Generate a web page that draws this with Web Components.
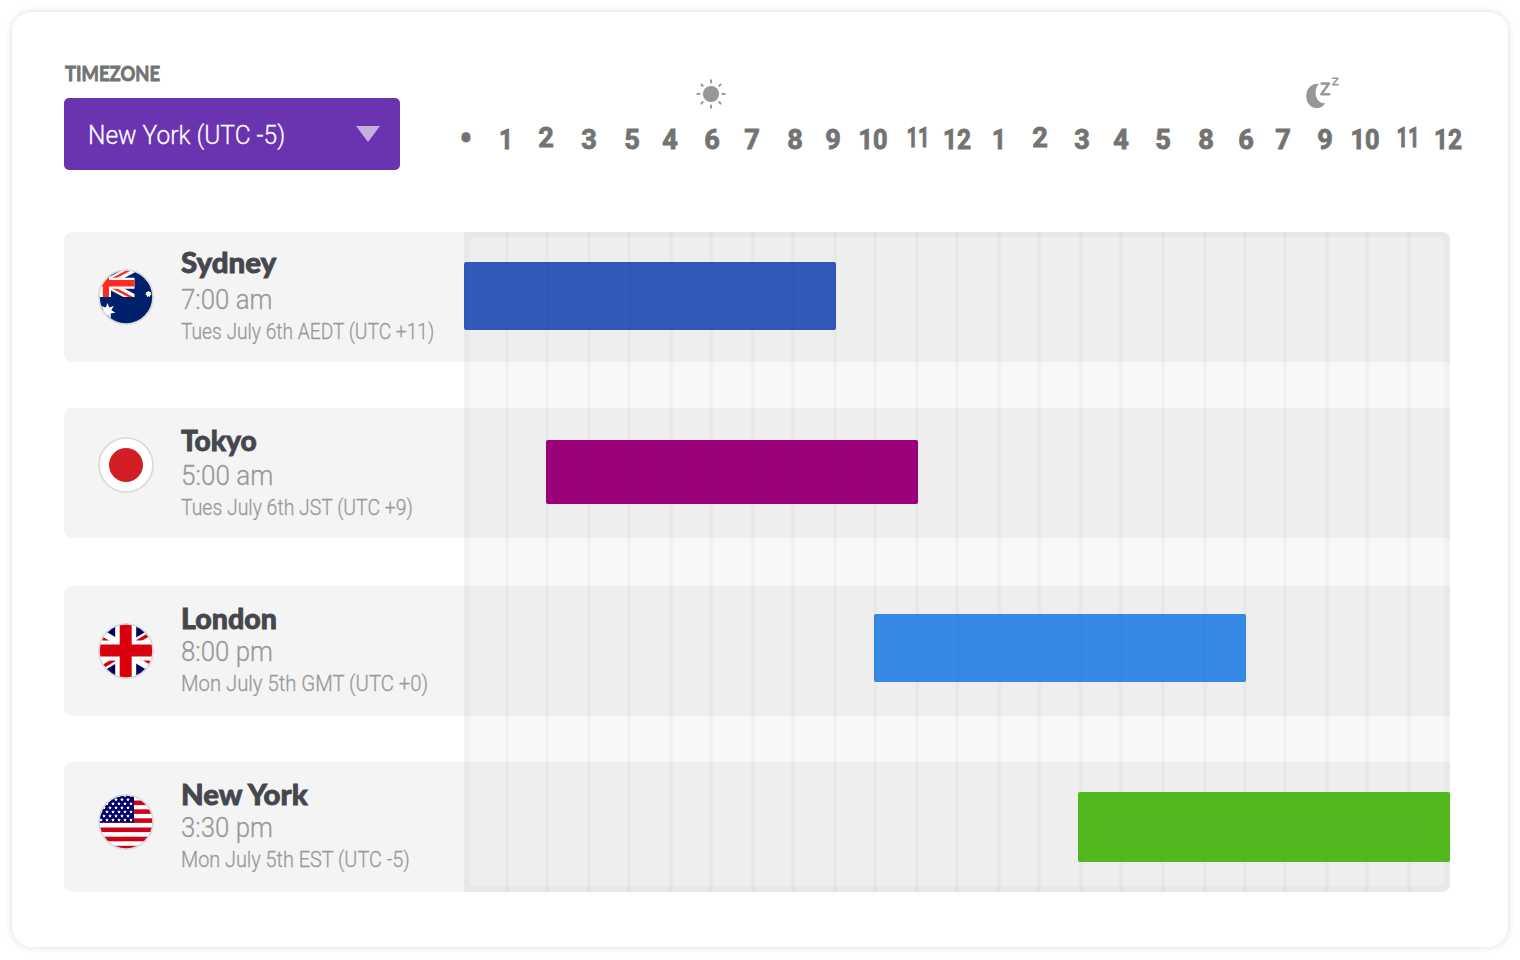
<!DOCTYPE html>
<html lang="en"><head><meta charset="utf-8"><title>Timezones</title>
<style>html,body{margin:0;background:#fff}body{width:1520px;height:960px;overflow:hidden}</style></head>
<body><tz-board></tz-board>
<script>
const define = (name, render, after) => customElements.define(name, class extends HTMLElement {
  connectedCallback() {
    if (this.shadowRoot) return;
    this.attachShadow({ mode: 'open' }).innerHTML = render(this);
    if (after) after(this);
  }
});

// Text squeezed or stretched horizontally to a set width.
define('fit-text', el => `<style>
:host{display:block;height:var(--lh,30px);line-height:var(--lh,30px);white-space:nowrap}
span{display:inline-block;transform-origin:var(--origin,0) 50%}</style><span><slot></slot></span>`, el => {
  const s = el.shadowRoot.querySelector('span');
  s.style.transform = `scaleX(${+el.getAttribute('w') / s.offsetWidth})`;
});

const star = (x, y, r, n = 5, k = .42) => {
  let p = '';
  for (let i = 0; i < n * 2; i++) {
    const a = Math.PI * i / n - Math.PI / 2, q = i % 2 ? r * k : r;
    p += (x + q * Math.cos(a)).toFixed(2) + ',' + (y + q * Math.sin(a)).toFixed(2) + ' ';
  }
  return `<polygon points="${p}" fill="#fff"/>`;
};
const flags = {
  au: `<rect width="56" height="56" fill="#00206b"/><clipPath id="canton"><rect width="36.500" height="28"/></clipPath>
    <g clip-path="url(#canton)"><path stroke="#fff" stroke-width="8" d="M8 14.200L44 -5M8 14.200L44 33.400M8 14.200L-4 6"/>
    <path stroke="#ff2a22" stroke-width="2.400" d="M8 13.500L44 -5.700M8 14.900L44 34.100"/>
    <path fill="#fff" d="M0 8.800H37v10.900H13V29H2V19.700H0z"/><path fill="#ff2a22" d="M3 11H37v6.500H11V29H4.800V17.500H3z"/>
    <path fill="#ff2a22" d="M4.800 17V7.500L8 5l3 2v10z"/></g>${star(9.5, 42, 8, 7, .5)}${star(50.5, 25, 3.3, 7, .65)}`,
  jp: `<rect width="56" height="56" fill="#fff"/><circle cx="28" cy="28" r="17" fill="#d11f25"/>`,
  gb: `<rect width="56" height="56" fill="#00005e"/>
    <path stroke="#fff" stroke-width="12" d="M-12 3.500L68 51.500M-12 51.500L68 3.500"/>
    <path stroke="#d8000c" stroke-width="3.400" d="M28 29.700L-12 5.700M28 25.300L68 1.300M28 29.700L-12 53.700M28 25.300L68 49.300"/>
    <path stroke="#fff" stroke-width="21" d="M27.700 0V56"/><path stroke="#fff" stroke-width="20" d="M0 27.500H56"/>
    <path stroke="#d8000c" stroke-width="12" d="M27.700 0V56M0 27.500H56"/>`,
  us: `<rect width="56" height="56" fill="#fff"/>` +
    [6.5, 15.3, 24.3, 33.5, 42.7, 51.8].map(y => `<rect y="${y}" width="56" height="4.6" fill="#d0021b"/>`).join('') +
    `<rect width="36" height="28.5" fill="#000066"/>` +
    [1.5, 5.6, 9.7, 13.8, 17.9, 22, 26].map((y, r) => [0, 1, 2, 3, 4, 5].map(c => r % 2 && c > 4 ? '' : star(3 + c * 6 + (r % 2 ? 3 : 0), y, 1.9, 5, .5)).join('')).join('')
};
define('country-flag', el => `<style>:host{display:block;width:56px;height:56px;flex:none}svg{display:block}</style>
<svg width="56" height="56" viewBox="0 0 56 56" fill="none"><defs><clipPath id="c"><circle cx="28" cy="28" r="27.2"/></clipPath></defs>
<g clip-path="url(#c)">${flags[el.getAttribute('code')]}</g><circle cx="28" cy="28" r="27" stroke="#dadadd" stroke-width="1.7"/></svg>`);

define('sun-icon', () => `<style>:host,svg{display:block}</style><svg width="30" height="30" viewBox="-15 -15 30 30"><circle r="8.1" fill="#979797"/>
<path stroke="#979797" stroke-width="2" stroke-linecap="round" d="M0-13.7V-11.5M0 11.5V13.7M-13.7 0H-11.5M11.5 0H13.7M-9.6-9.6L-8.3-8.1M9.6-9.6L8.3-8.1M-9.6 9.6L-8.3 8.1M9.6 9.6L8.3 8.1"/></svg>`);
define('moon-icon', () => `<style>:host,svg{display:block}</style><svg width="36" height="36" viewBox="0 0 36 36" fill="none">
<path fill="#979797" d="M13 6.800C5.500 5.800 .2 12 .2 19C.2 26 5 31.200 11 31.200C14.500 31.200 17.700 29.500 19 26.100C11.500 27.500 5.500 15.500 13 6.800Z"/>
<path stroke="#979797" stroke-width="2.400" stroke-linejoin="round" stroke-linecap="round" d="M15.700 6.500H23L15.300 17.300H23.300"/><path stroke="#979797" stroke-width="1.600" stroke-linejoin="round" stroke-linecap="round" d="M26.700 1.200H32L26.700 7.800H32.200"/></svg>`);

define('zone-select', () => `<style>:host{display:block;width:336px;flex:none}
.l{font:bold 20px Lato,sans-serif;color:#737373;--lh:24px;-webkit-text-stroke:.8px #737373;margin-left:.5px}
.b{margin-top:13px;height:72px;border-radius:5px;background:#6a34b1;display:flex;align-items:center;justify-content:space-between;padding:0 20px 0 24px;box-sizing:border-box;color:#fff;font:300 26px Roboto,sans-serif;-webkit-text-stroke:.3px #fff}
.b fit-text{margin-top:2px}
svg{display:block}</style><fit-text class="l" w="95">TIMEZONE</fit-text>
<div class="b"><fit-text w="197">New York (UTC -5)</fit-text><svg width="24" height="16" viewBox="0 0 24 16"><path d="M0 0H24L12 16Z" fill="#c5aee0"/></svg></div>`);

const hours = [['•',466,-.5],[1,506.5],[2,546.5,-1.5],[3,589.5],[5,632],[4,670],[6,712],[7,752],[8,795.5],[9,833.5],[10,873.5],[11,918,-1.5],[12,957.5],[1,999],[2,1040,-1.5],[3,1082],[4,1121],[5,1163],[8,1206],[6,1246.5],[7,1283.5],[9,1325.5],[10,1365.5],[11,1408.5,-1.5],[12,1448]];
const widths = { '•': 13, 10: 29, 11: 23, 12: 28, 1: 14 };
const edges = hours.map((h, i) => i ? (h[1] + hours[i - 1][1]) / 2 : 446).concat(1468);
define('hour-scale', () => `<style>:host{display:block;width:1022px;flex:none}
.icons{display:flex;height:42px}.icons sun-icon{margin:3px 0 0 250px}.icons moon-icon{margin:1px 0 0 580px}
.h{display:flex;height:42px;align-items:center;font:bold 28px/42px Roboto,sans-serif;color:#737373;-webkit-text-stroke:.9px #737373;--lh:42px;--origin:50%}
.h fit-text{flex:none;text-align:center}.h fit-text:first-child{font-size:38px}</style><div class="icons"><sun-icon></sun-icon><moon-icon></moon-icon></div>
<div class="h">${hours.map((h, i) => {
  const half = Math.min(h[1] - edges[i], edges[i + 1] - h[1]), ml = h[1] - half - edges[i], mr = edges[i + 1] - h[1] - half;
  return `<fit-text w="${widths[h[0]] || 15.5}" style="width:${half * 2}px;margin:0 ${mr}px 0 ${ml}px;transform:translateY(${(h[2] || 0) + .5}px)">${h[0]}</fit-text>`;
}).join('')}</div>`);

define('city-row', el => {
  const a = n => el.getAttribute(n);
  return `<style>:host{display:flex;height:130px;width:1386px;background:#f4f4f4;border-radius:8px 0 0 8px;align-items:flex-start}
country-flag{margin:${a('fy')}px 0 0 34.4px}.t{margin-left:26.2px;width:283.4px;flex:none;color:#999;font:300 27.5px Roboto,sans-serif;-webkit-text-stroke:.3px #999}
.n{--lh:36px;font:900 29px Lato,sans-serif;color:#45474d;margin-top:${a('ny')}px;-webkit-text-stroke:.8px #45474d}
.c{--lh:32px;margin-top:${a('cy')}px}.d{--lh:28px;font-size:22px;margin-top:2px}
.p{width:986px;height:130px;background:#eee;display:flow-root;flex:none}
.bar{position:relative;z-index:2;height:${a('bh')}px;width:372px;margin:${a('by')}px 0 0 ${a('bx')}px;background:repeating-linear-gradient(90deg,rgba(0,0,0,.012) 0 4px,transparent 4px 41px) ${a('gx') || 0}px 0,${a('color')};border-radius:2px}</style><country-flag code="${a('code')}"></country-flag>
<div class="t"><fit-text class="n" w="${a('nw')}">${a('name')}</fit-text><fit-text class="c" w="${a('cw')}">${a('time')}</fit-text><fit-text class="d" w="${a('dw')}">${a('date')}</fit-text></div>
<div class="p"><div class="bar"></div></div>`;
});

const lines = [505,545,587,627,669,709,751,791,833,873,915,955,997,1037,1079,1119,1161,1203,1243,1283,1325,1365,1407];
define('grid-lines', () => `<style>:host,svg{display:block}</style><svg width="986" height="660">
<g fill="#000" fill-opacity=".022">${lines.map(x => `<rect x="${x - 464}" width="4" height="660"/>`).join('')}
<path fill-rule="evenodd" d="M0 0H986V660H0ZM10 5Q6 5 6 9V649Q6 654 10 654H976Q980 654 980 649V9Q980 5 976 5Z"/></g></svg>`);

define('tz-board', () => `<style>
:host{display:block;box-sizing:border-box;width:1496px;height:935px;margin:12px;border-radius:20px;background:#fff;box-shadow:0 0 7px rgba(0,0,0,.15);padding:48.5px 46px 0 52px}
.top{display:flex;height:171.5px}hour-scale{margin:15.5px 0 0 46px}
.rows{position:relative;width:1386px;height:660px;display:flex;flex-direction:column;border-radius:8px;overflow:hidden}
.bg{position:absolute;left:400px;top:0;width:986px;height:660px;background:#f8f8f8}
grid-lines{position:absolute;z-index:1;left:400px;top:0}
city-row{position:relative;flex:none}</style>
<div class="top"><zone-select></zone-select><hour-scale></hour-scale></div>
<div class="rows"><div class="bg"></div>
<city-row code="au" name="Sydney" time="7:00 am" date="Tues July 6th AEDT (UTC +11)" nw="95.5" cw="91" dw="253" fy="36.5" ny="12" cy="4" by="30" bh="68" bx="0" color="#3158ba"></city-row>
<city-row style="margin-top:46px" code="jp" name="Tokyo" time="5:00 am" date="Tues July 6th JST (UTC +9)" nw="75.5" cw="92" dw="232" fy="28.5" ny="14" cy="2" by="32" bh="64" bx="82" color="#990079"></city-row>
<city-row style="margin-top:48px" code="gb" name="London" time="8:00 pm" date="Mon July 5th GMT (UTC +0)" nw="95.5" cw="92" dw="247" fy="37" ny="14" cy="0" by="28" bh="68" bx="410" color="#368ae5"></city-row>
<city-row style="margin-top:46px" code="us" name="New York" time="3:30 pm" date="Mon July 5th EST (UTC -5)" nw="126.5" cw="92" dw="229" fy="31.5" ny="14" cy="0" by="30" bh="70" bx="614" color="#53b81d"></city-row>
<grid-lines></grid-lines></div>`);
</script></body></html>
